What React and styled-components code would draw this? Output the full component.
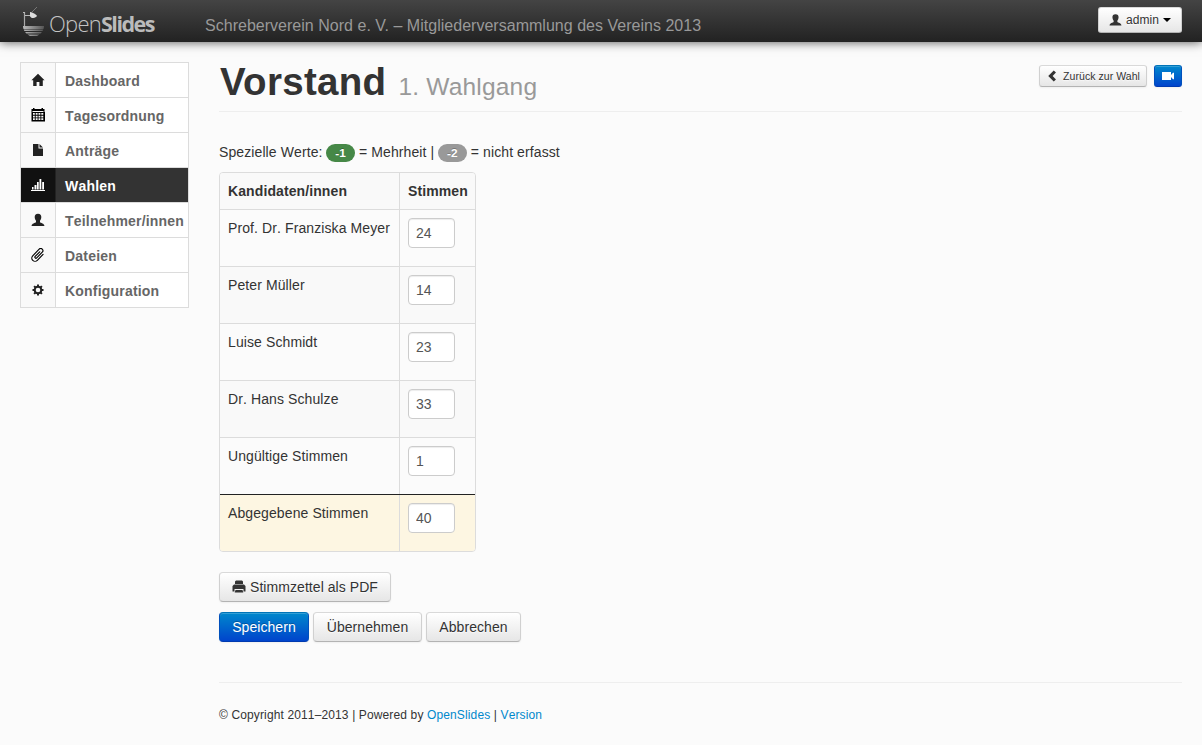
import React from 'react';
import styled, { createGlobalStyle, css } from 'styled-components';

const GlobalStyle = createGlobalStyle`
  * { box-sizing: border-box; }
  body {
    margin: 0;
    background: #fbfbfb;
    color: #333;
    font: 14px/20px "Liberation Sans", Arial, sans-serif;
    font-kerning: none;
    letter-spacing: 0.1px;
  }
  a { color: #0088cc; text-decoration: none; }
`;

const Header = styled.header`
  display: flex;
  height: 42px;
  padding: 0 20px;
  background: linear-gradient(#444, #222);
  box-shadow: 0 0 10px rgba(0, 0, 0, 0.7);
`;

const Brand = styled.div`
  display: flex;
  width: 185px;
`;

const BrandName = styled.span`
  margin: 7px 0 0 5px;
  font: 300 22px/32px "Open Sans", sans-serif;
  letter-spacing: -0.75px;
  color: #c4c4c4;
  b { font-weight: 700; font-size: 21.5px; letter-spacing: -1.5px; color: #bbb; }
`;

const EventName = styled.div`
  flex: 1;
  padding-top: 16px;
  font-size: 16px;
  font-kerning: normal;
  letter-spacing: 0.02px;
  color: #999;
  white-space: nowrap;
`;

const sizes = {
  normal: css`height: 30px; padding: 0 12px; font-size: 14px; border-radius: 4px;`,
  small: css`height: 26px; padding: 0 10px; font-size: 12px; border-radius: 3px;`,
  mini: css`height: 22px; padding: 0 6px; font-size: 10.5px; border-radius: 3px;`,
};

const Button = styled.button`
  display: inline-flex;
  align-items: center;
  justify-content: center;
  width: ${(p) => p.$width}px;
  ${(p) => sizes[p.$size || 'normal']}
  flex: none;
  font-family: inherit;
  letter-spacing: 0.06px;
  white-space: nowrap;
  gap: 4px;
  color: #333;
  text-shadow: 0 1px 1px rgba(255, 255, 255, 0.75);
  background: linear-gradient(#fff, #e6e6e6);
  border: 1px solid;
  border-color: #d9d9d9 #d0d0d0 #b3b3b3;
  box-shadow: inset 0 1px 0 rgba(255, 255, 255, 0.2), 0 1px 2px rgba(0, 0, 0, 0.05);
  ${(p) => p.$primary && css`
    color: #fff;
    text-shadow: 0 -1px 0 rgba(0, 0, 0, 0.25);
    background: linear-gradient(#0088cc, #0044cc);
    border-color: #0074b8 #0050bc #003ab0;
  `}
`;

const UserButton = styled(Button)`
  margin-top: 7px;
`;

const Caret = styled.span`
  border: 4px solid transparent;
  border-top-color: #000;
  border-bottom: 0;
`;

const Page = styled.div`
  display: flex;
  gap: 30px;
  padding: 20px 20px 0;
`;

const Sidebar = styled.nav`
  width: 169px;
  flex: none;
  align-self: flex-start;
  border: 1px solid #dcdcdc;
`;

const NavItem = styled.a`
  display: flex;
  height: ${(p) => (p.$last ? 34 : 35)}px;
  border-bottom: ${(p) => (p.$last ? 0 : 1)}px solid #dcdcdc;
  background: ${(p) => (p.$active ? '#333' : '#fff')};
  color: ${(p) => (p.$active ? '#fff' : '#666')};
  font-weight: bold;
  letter-spacing: 0.2px;
  line-height: 36px;
  white-space: nowrap;
`;

const NavIcon = styled.span`
  display: flex;
  align-items: center;
  justify-content: center;
  width: 35px;
  margin-right: 9px;
  padding-right: 1px;
  border-right: 1px solid ${(p) => (p.$active ? '#222' : '#dcdcdc')};
  background: ${(p) => (p.$active ? '#111' : '#f9f9f9')};
  color: ${(p) => (p.$active ? '#fff' : '#222')};
`;

const Main = styled.main`
  flex: 1;
`;

const PageHeader = styled.div`
  display: flex;
  justify-content: space-between;
  height: 50px;
  border-bottom: 1px solid #eee;
`;

const Title = styled.h1`
  margin: 0 0 0 1px;
  font-size: 38.5px;
  line-height: 40px;
  font-kerning: normal;
  letter-spacing: 0.3px;
  small {
    margin-left: 1px;
    font-size: 24.5px;
    font-weight: normal;
    letter-spacing: 0.2px;
    color: #999;
  }
`;

const Actions = styled.div`
  display: flex;
  gap: 7px;
  padding-top: 3px;
`;

const Legend = styled.p`
  display: flex;
  align-items: center;
  gap: 4px;
  height: 20px;
  margin: 30px 0 10px;
`;

const Badge = styled.span`
  width: 29px;
  height: 18px;
  margin: 2px 0 0 -0.5px;
  border-radius: 9px;
  background: ${(p) => (p.$success ? '#468847' : '#999')};
  color: #fff;
  font-size: 11.8px;
  font-weight: bold;
  line-height: 18px;
  text-align: center;
  text-shadow: 0 -1px 0 rgba(0, 0, 0, 0.25);
`;

const VoteTable = styled.div`
  width: 257px;
  border: 1px solid #dcdcdc;
  border-radius: 4px;
  overflow: hidden;
`;

const Row = styled.div`
  display: flex;
  height: ${(p) => (p.$head ? 36 : 57)}px;
  border-top: ${(p) => (p.$head ? 0 : 1)}px solid ${(p) => (p.$total ? '#222' : '#dcdcdc')};
  background: ${(p) => (p.$total ? '#fdf6e2' : p.$odd ? '#f9f9f9' : 'transparent')};
  font-weight: ${(p) => (p.$head ? 'bold' : 'normal')};
`;

const Cell = styled.div`
  width: ${(p) => (p.$name ? 180 : 75)}px;
  padding: 8px;
  white-space: nowrap;
  border-right: ${(p) => (p.$name ? 1 : 0)}px solid #dcdcdc;
`;

const VoteInput = styled.input`
  display: block;
  width: 47px;
  height: 30px;
  padding: 4px 7px;
  border: 1px solid #ccc;
  border-radius: 4px;
  background: #fff;
  box-shadow: inset 0 1px 1px rgba(0, 0, 0, 0.075);
  color: #555;
  font: inherit;
`;

const ButtonRow = styled.div`
  display: flex;
  gap: 4px;
  margin-top: ${(p) => p.$top}px;
`;

const Footer = styled.footer`
  margin-top: 40px;
  padding-top: 22px;
  border-top: 1px solid #eee;
  font-size: 12px;
  letter-spacing: 0.13px;
`;

const shapes = {
  home: <path d="M7 .8 13.6 7.300H11.800V13H8.4V9H5.6v4H2.200V7.300H.4Z" />,
  calendar: (
    <path fill="#000" fillRule="evenodd" d="M2 0h1.500v1h7V0H12v1h1.500v3H14v9.500H.5V4H.500V1H2Z M1.500 3v1h11V3Z M2 5v1.800h1.800V5Z M4.700 5v1.800h1.900V5Z M7.500 5v1.800h1.900V5Z M10.300 5v1.800h2V5Z M2 7.700v1.700h1.800V7.700Z M4.700 7.700v1.700h1.900V7.700Z M7.500 7.700v1.700h1.900V7.700Z M10.300 7.700v1.700h2V7.700Z M2 10.300V12h1.800v-1.700Z M4.700 10.300V12h1.900v-1.700Z M7.500 10.300V12h1.900v-1.700Z M10.300 10.300V12h2v-1.700Z" />
  ),
  file: <path d="M2 1h5.500v4.500H12V13H2Z M8.500 1 12 4.500H8.500Z" />,
  chart: <path d="M0 12h14v1H0Z M1 9h1.500v2.500H1Z M3.500 7h2v4.500h-2Z M6 4h1.700v7.500H6Z M8.500 1h1.800v10.500H8.500Z M11.200 4H13v7.500h-1.800Z" />,
  user: <path d="M7 .8c2.400 0 3.300 1.400 3.300 3.300 0 1.700-.7 2.900-1.300 3.700v1.400c.6.900 4.400 1 4.400 3.800H.6c0-2.800 3.800-2.900 4.400-3.800V7.800C4.400 7 3.700 5.800 3.700 4.100 3.700 2.200 4.600.8 7 .8Z" />,
  clip: (
    <path
      fill="none"
      stroke="#000"
      strokeWidth="1.150"
      strokeLinecap="round"
      transform="rotate(-46 7 7)"
      d="M11 10.200H2.700a3.200 3.200 0 0 1 0-6.400H12a2.150 2.150 0 0 1 0 4.300H4a1.050 1.050 0 0 1 0-2.100H10.500"
    />
  ),
  cog: (
    <>
      <circle cx="7" cy="7" r="3.300" fill="none" stroke="currentColor" strokeWidth="2" />
      <path d="M6 1.500h2v2H6Z M6 10.500h2v2H6Z M1.500 6h2v2h-2Z M10.500 6h2v2h-2Z M2.400 3.800 3.800 2.400l1.400 1.400-1.400 1.400Z M8.800 3.800l1.400-1.400 1.400 1.400-1.400 1.400Z M2.400 10.200l1.400-1.400 1.400 1.400-1.400 1.400Z M8.800 10.200l1.400-1.400 1.400 1.400-1.400 1.400Z" />
    </>
  ),
  back: <path d="M8.300 1 10.700 3.300 7.100 7l3.600 3.700L8.300 13 2.400 7Z" />,
  camera: <path d="M1 3h9v3l2-2.300h1v6.600h-1L10 8v3H1Z" />,
  print: <path fillRule="evenodd" d="M4 .5h6l1 1V4H3V1.500Z M2 4.500h10l1.500 1.500v5.500H11.500V9h-9v2.500H.500V6Z M3.500 10h7l.8 2.500H2.700Z" />,
};

function Icon({ name, size = 14 }) {
  return <svg width={size} height={size} viewBox="0 0 14 14" fill="currentColor" aria-hidden="true">{shapes[name]}</svg>;
}

function Logo() {
  return (
    <svg width="24" height="42" viewBox="0 0 24 42" aria-hidden="true">
      <defs>
        <linearGradient id="hull" x1="0" x2="1">
          <stop offset="0" stopColor="#bbb" />
          <stop offset="1" stopColor="#555" />
        </linearGradient>
      </defs>
      <path d="M4.500 12v14" stroke="#aaa" strokeWidth="1.200" />
      <path d="M3 12.500h2M5 15.500h6" stroke="#bbb" strokeWidth="1" />
      <path d="m12 12 5-5" stroke="#777" strokeWidth="1" />
      <path d="M10 12c1.500.2 4.500 1 7 3.800-1 2.500-5.500 3.200-7 .4Z" fill="#ddd" />
      <path d="M3 26h21c0 1-.1 2-.5 3h-20C3.100 28 3 27 3 26Z" fill="url(#hull)" />
      <path d="M3.700 29.500H23.300l-.8 1.500H4.500Z M5 32h17l-1.500 1.500h-14Z M7.500 34.500h12L17 36h-7Z" fill="url(#hull)" />
    </svg>
  );
}

const navItems = [
  ['home', 'Dashboard'],
  ['calendar', 'Tagesordnung'],
  ['file', 'Anträge'],
  ['chart', 'Wahlen'],
  ['user', 'Teilnehmer/innen'],
  ['clip', 'Dateien'],
  ['cog', 'Konfiguration'],
];

const votes = [
  ['Prof. Dr. Franziska Meyer', '24'],
  ['Peter Müller', '14'],
  ['Luise Schmidt', '23'],
  ['Dr. Hans Schulze', '33'],
  ['Ungültige Stimmen', '1'],
  ['Abgegebene Stimmen', '40'],
];

export default function App() {
  return (
    <>
      <GlobalStyle />
      <Header>
        <Brand>
          <Logo />
          <BrandName>Open<b>Slides</b></BrandName>
        </Brand>
        <EventName>Schreberverein Nord e. V. – Mitgliederversammlung des Vereins 2013</EventName>
        <UserButton $size="small" $width={84}>
          <Icon name="user" />admin<Caret />
        </UserButton>
      </Header>
      <Page>
        <Sidebar>
          {navItems.map(([icon, label], i) => {
            const active = label === 'Wahlen';
            return (
              <NavItem key={label} $active={active} $last={i === navItems.length - 1}>
                <NavIcon $active={active}><Icon name={icon} /></NavIcon>
                {label}
              </NavItem>
            );
          })}
        </Sidebar>
        <Main>
          <PageHeader>
            <Title>Vorstand <small>1. Wahlgang</small></Title>
            <Actions>
              <Button $size="mini" $width={108}><Icon name="back" />Zurück zur Wahl</Button>
              <Button $size="mini" $width={28} $primary><Icon name="camera" /></Button>
            </Actions>
          </PageHeader>
          <Legend>
            <span>Spezielle Werte:</span>
            <Badge $success>-1</Badge>
            <span>= Mehrheit |</span>
            <Badge>-2</Badge>
            <span>= nicht erfasst</span>
          </Legend>
          <VoteTable>
            <Row $head $odd>
              <Cell $name>Kandidaten/innen</Cell>
              <Cell>Stimmen</Cell>
            </Row>
            {votes.map(([name, value], i) => (
              <Row key={name} $odd={i % 2 === 1} $total={i === votes.length - 1}>
                <Cell $name>{name}</Cell>
                <Cell><VoteInput defaultValue={value} /></Cell>
              </Row>
            ))}
          </VoteTable>
          <ButtonRow $top={20}>
            <Button $width={172}><Icon name="print" />Stimmzettel als PDF</Button>
          </ButtonRow>
          <ButtonRow $top={10}>
            <Button $primary $width={90}>Speichern</Button>
            <Button $width={109}>Übernehmen</Button>
            <Button $width={95}>Abbrechen</Button>
          </ButtonRow>
          <Footer>
            © Copyright 2011–2013 | Powered by <a>OpenSlides</a> | <a>Version</a>
          </Footer>
        </Main>
      </Page>
    </>
  );
}
